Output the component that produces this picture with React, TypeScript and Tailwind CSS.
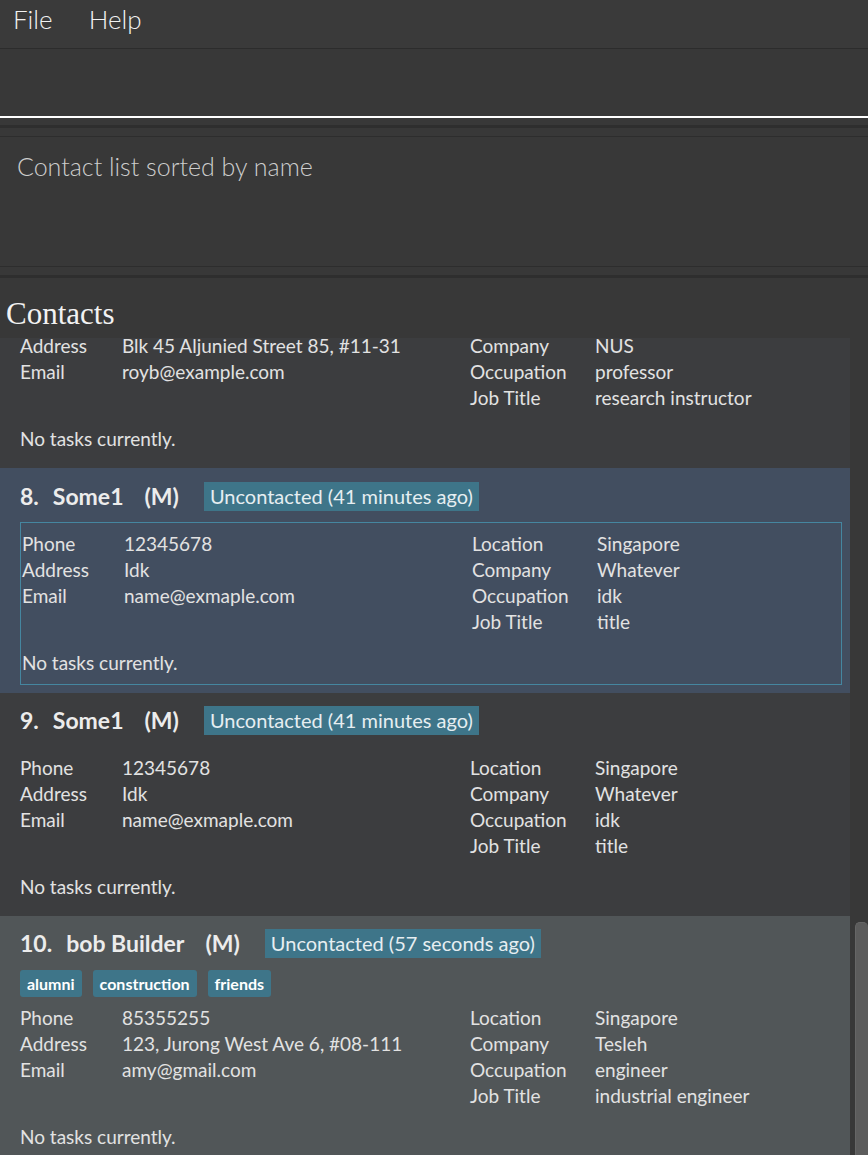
type Contact = {
    index: number,
    name: string,
    status: string,
    tags?: string[],
    phone: string,
    address: string,
    email: string,
    location: string,
    company: string,
    occupation: string,
    jobTitle: string,
    tone: "plain" | "selected" | "hover",
    partial?: boolean
}

const contacts: Contact[] = [
    {
        index: 7, name: "Roy Balakrishnan", status: "Uncontacted (41 minutes ago)",
        phone: "92624417", address: "Blk 45 Aljunied Street 85, #11-31", email: "royb@example.com",
        location: "Singapore", company: "NUS", occupation: "professor", jobTitle: "research instructor", tone: "plain", partial: true
    },
    {
        index: 8, name: "Some1", status: "Uncontacted (41 minutes ago)",
        phone: "12345678", address: "Idk", email: "name@exmaple.com",
        location: "Singapore", company: "Whatever", occupation: "idk", jobTitle: "title", tone: "selected"
    },
    {
        index: 9, name: "Some1", status: "Uncontacted (41 minutes ago)",
        phone: "12345678", address: "Idk", email: "name@exmaple.com",
        location: "Singapore", company: "Whatever", occupation: "idk", jobTitle: "title", tone: "plain"
    },
    {
        index: 10, name: "bob Builder", status: "Uncontacted (57 seconds ago)", tags: ["alumni", "construction", "friends"],
        phone: "85355255", address: "123, Jurong West Ave 6, #08-111", email: "amy@gmail.com",
        location: "Singapore", company: "Tesleh", occupation: "engineer", jobTitle: "industrial engineer", tone: "hover"
    }
]

const font = { fontFamily: "Lato, 'Open Sans', sans-serif" }

const Field = ({ label, value, wide }: { label: string, value?: string, wide?: boolean }) => (
    <div className="flex h-[26px] items-center">
        <span className={wide ? "w-[125px] shrink-0" : "w-[102px] shrink-0"}>{label}</span>
        <span>{value}</span>
    </div>
)

const Details = ({ c }: { c: Contact }) => (
    <>
        <div className="grid grid-cols-[450px_1fr] text-[19px] text-[#e2e2e2]">
            <div className="flex flex-col">
                {!c.partial && <Field label="Phone" value={c.phone} />}
                <Field label="Address" value={c.address} />
                <Field label="Email" value={c.email} />
            </div>
            <div className="flex flex-col">
                {!c.partial && <Field wide label="Location" value={c.location} />}
                <Field wide label="Company" value={c.company} />
                <Field wide label="Occupation" value={c.occupation} />
                <Field wide label="Job Title" value={c.jobTitle} />
            </div>
        </div>
        <div className="mt-[15px] flex h-[26px] items-center text-[19px] text-[#e2e2e2]">No tasks currently.</div>
    </>
)

const Header = ({ c }: { c: Contact }) => (
    <div className="flex h-[30px] items-center text-[#ececec]">
        <span className="text-[23px] font-bold pr-[14px]">{c.index}.</span>
        <span className="text-[23px] font-bold pr-[21px]">{c.name}</span>
        <span className="text-[23px] font-bold pr-[25px]">(M)</span>
        <span className="bg-[#3e7589] h-[29px] px-[6px] flex items-center text-[20px] text-[#e6eef1]">{c.status}</span>
    </div>
)

const Card = ({ c }: { c: Contact }) => {
    const bg = c.tone === "selected" ? "bg-[#424e60]" : c.tone === "hover" ? "bg-[#515658]" : "bg-[#3c3d3f]"
    if (c.partial) {
        // list is scrolled: top of this card sits above the viewport
        return (
            <div className={`${bg} -mt-[5px] px-[20px] pb-[16px]`}>
                <Details c={c} />
            </div>
        )
    }
    return (
        <div className={`${bg} ${c.tone === "selected" ? "pl-[20px] pr-[8px] pt-[13px] pb-[8px]" : "px-[20px] pt-[12px] pb-[16px]"}`}>
            <Header c={c} />
            {c.tags && (
                <div className="mt-[12px] mb-[8px] flex gap-[11px]">
                    {c.tags.map(t => (
                        <span key={t} className="bg-[#3e7589] rounded-[3px] h-[27px] px-[7px] flex items-center text-[16px] font-bold text-white">{t}</span>
                    ))}
                </div>
            )}
            {c.tone === "selected" ? (
                <div className="mt-[11px] border border-[#4586a0] pl-[1px] pt-[8px] pb-[8px]">
                    <Details c={c} />
                </div>
            ) : (
                <div className={c.tags ? "" : "mt-[20px]"}>
                    <Details c={c} />
                </div>
            )}
        </div>
    )
}

const App = () => {
    return (
        <div className="h-[1155px] w-[868px] overflow-hidden bg-[#383838] flex flex-col" style={font}>
            <div className="h-[49px] shrink-0 bg-[#3a3a3a] border-b border-[#2c2c2c] flex items-start gap-[36px] px-[13px] text-[26px] font-light text-[#f2f2f2]">
                <span>File</span>
                <span>Help</span>
            </div>
            <div className="h-[67px] shrink-0 bg-[#383838]" />
            <div className="h-[2px] shrink-0 bg-white" />
            <div className="h-[7px] shrink-0" />
            <div className="h-[3px] shrink-0 bg-[#2e2e2e]" />
            <div className="h-[8px] shrink-0" />
            <div className="h-[1px] shrink-0 bg-[#2d2d2d]" />
            <div className="h-[129px] shrink-0 px-[17px] pt-[11px] text-[25px] font-light text-[#cdcdcd]">
                Contact list sorted by name
            </div>
            <div className="h-[1px] shrink-0 bg-[#2d2d2d]" />
            <div className="h-[8px] shrink-0" />
            <div className="h-[3px] shrink-0 bg-[#2e2e2e]" />
            <div className="h-[60px] shrink-0 flex items-center pt-[10px] px-[6px] text-[31px] leading-none text-[#f2f2f2]" style={{ fontFamily: "'Liberation Serif', serif" }}>
                Contacts
            </div>
            <div className="flex flex-1 min-h-0">
                <div className="w-[850px] overflow-hidden">
                    <div className="flex flex-col">
                        {contacts.map(c => <Card key={c.index} c={c} />)}
                    </div>
                </div>
                <div className="flex-1 flex flex-col pt-[584px] pl-[5px] bg-[#383838]">
                    <div className="flex-1 rounded-t-[5px] bg-[#5c5c5c] border-l border-t border-[#666]" />
                </div>
            </div>
        </div>
    )
}

export default App
